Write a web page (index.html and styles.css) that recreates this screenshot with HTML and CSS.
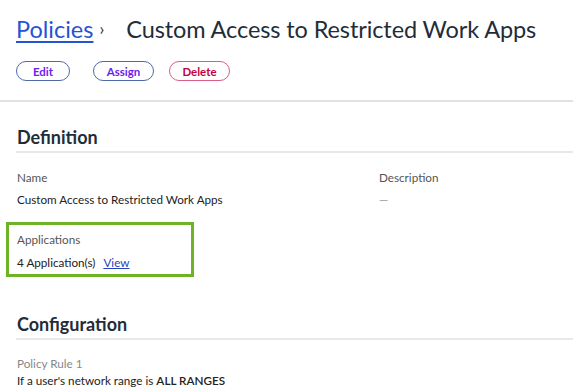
FILE: index.html
```html
<!DOCTYPE html>
<html lang="en">
  <head>
    <meta charset="UTF-8" />
    <title>Custom Access to Restricted Work Apps</title>
    <link rel="stylesheet" href="styles.css">
  </head>
  <body>
    <div class="page-header">
      <h1 class="crumbs">
        <a href="#" class="crumb-link">Policies</a>
        <span class="crumb-sep">&#8250;</span>
        <span class="crumb-title">Custom Access to Restricted Work Apps</span>
      </h1>
      <div class="actions">
        <button class="pill edit">Edit</button>
        <button class="pill assign">Assign</button>
        <button class="pill danger">Delete</button>
      </div>
    </div>

    <section class="section">
      <h2>Definition</h2>
      <div class="fields">
        <div class="field">
          <div class="label">Name</div>
          <div class="value">Custom Access to Restricted Work Apps</div>
        </div>
        <div class="field">
          <div class="label">Description</div>
          <div class="value muted">&mdash;</div>
        </div>
        <div class="field highlight">
          <div class="label">Applications</div>
          <div class="value">4 Application(s) <a href="#" class="view-link">View</a></div>
        </div>
      </div>
    </section>

    <section class="section">
      <h2>Configuration</h2>
      <div class="rule">
        <div class="rule-name">Policy Rule 1</div>
        <div class="value">If a user's network range is <span class="caps">ALL RANGES</span></div>
        <div class="value">and the user's device is restricted from <span class="caps">ACCESS</span></div>
      </div>
    </section>
  </body>
</html>
```

FILE: styles.css
```css
body {
  margin: 0;
  font-family: 'Lato', sans-serif;
  color: #1f2d3a;
  background: #fff;
  overflow: hidden;
}
.page-header {
  padding: 12px 16px 19px;
  border-bottom: 2px solid #e2e2e2;
}
.crumbs {
  margin: 0;
  font-size: 23.5px;
  font-weight: 400;
  line-height: 34px;
  display: flex;
  align-items: center;
  white-space: nowrap;
}
.crumb-link {
  color: #2354d4;
  text-decoration: underline;
  text-underline-offset: 3px;
  text-decoration-thickness: 2px;
}
.crumb-sep {
  font-size: 17px;
  margin: 0 22px 0 6px;
  color: #333;
}
.crumb-title {
  letter-spacing: -0.1px;
}
.actions {
  display: flex;
  margin-top: 15px;
}
.pill {
  font-family: inherit;
  font-size: 11.5px;
  font-weight: 700;
  color: #6a1ef0;
  background: #fff;
  border: 1.5px solid #4f6aa6;
  border-radius: 11px;
  height: 20px;
  padding: 0;
  cursor: pointer;
}
.edit {
  width: 54px;
}
.assign {
  width: 61px;
  margin-left: 23px;
}
.danger {
  width: 61px;
  margin-left: 15px;
  color: #c4003f;
  border-color: #db5d84;
}
.section {
  padding: 0 0 0 16px;
}
.section h2 {
  margin: 0;
  padding: 24px 0 3px 1px;
  font-size: 18px;
  font-weight: 700;
  border-bottom: 2px solid #e8e8e8;
}
.fields {
  display: grid;
  grid-template-columns: 362px 1fr;
  padding: 16px 0 12px;
  row-gap: 14px;
}
.field {
  padding-left: 1px;
}
.label {
  font-size: 11.7px;
  color: #555;
  line-height: 16px;
}
.value {
  font-size: 11.7px;
  color: #222;
  line-height: 18px;
  margin-top: 5px;
}
.muted {
  color: #999;
}
.highlight {
  border: 3px solid #6db325;
  margin-left: -10px;
  padding: 6px 0 3px 8px;
  width: 174px;
}
.highlight .value {
  margin-top: 6px;
}
.view-link {
  color: #2345b8;
  margin-left: 5px;
}
.rule {
  padding: 15px 0 0 1px;
}
.rule-name {
  font-size: 11.7px;
  color: #888;
  line-height: 16px;
}
.rule .value {
  margin-top: 0;
}
.caps {
  font-weight: 600;
}
```
